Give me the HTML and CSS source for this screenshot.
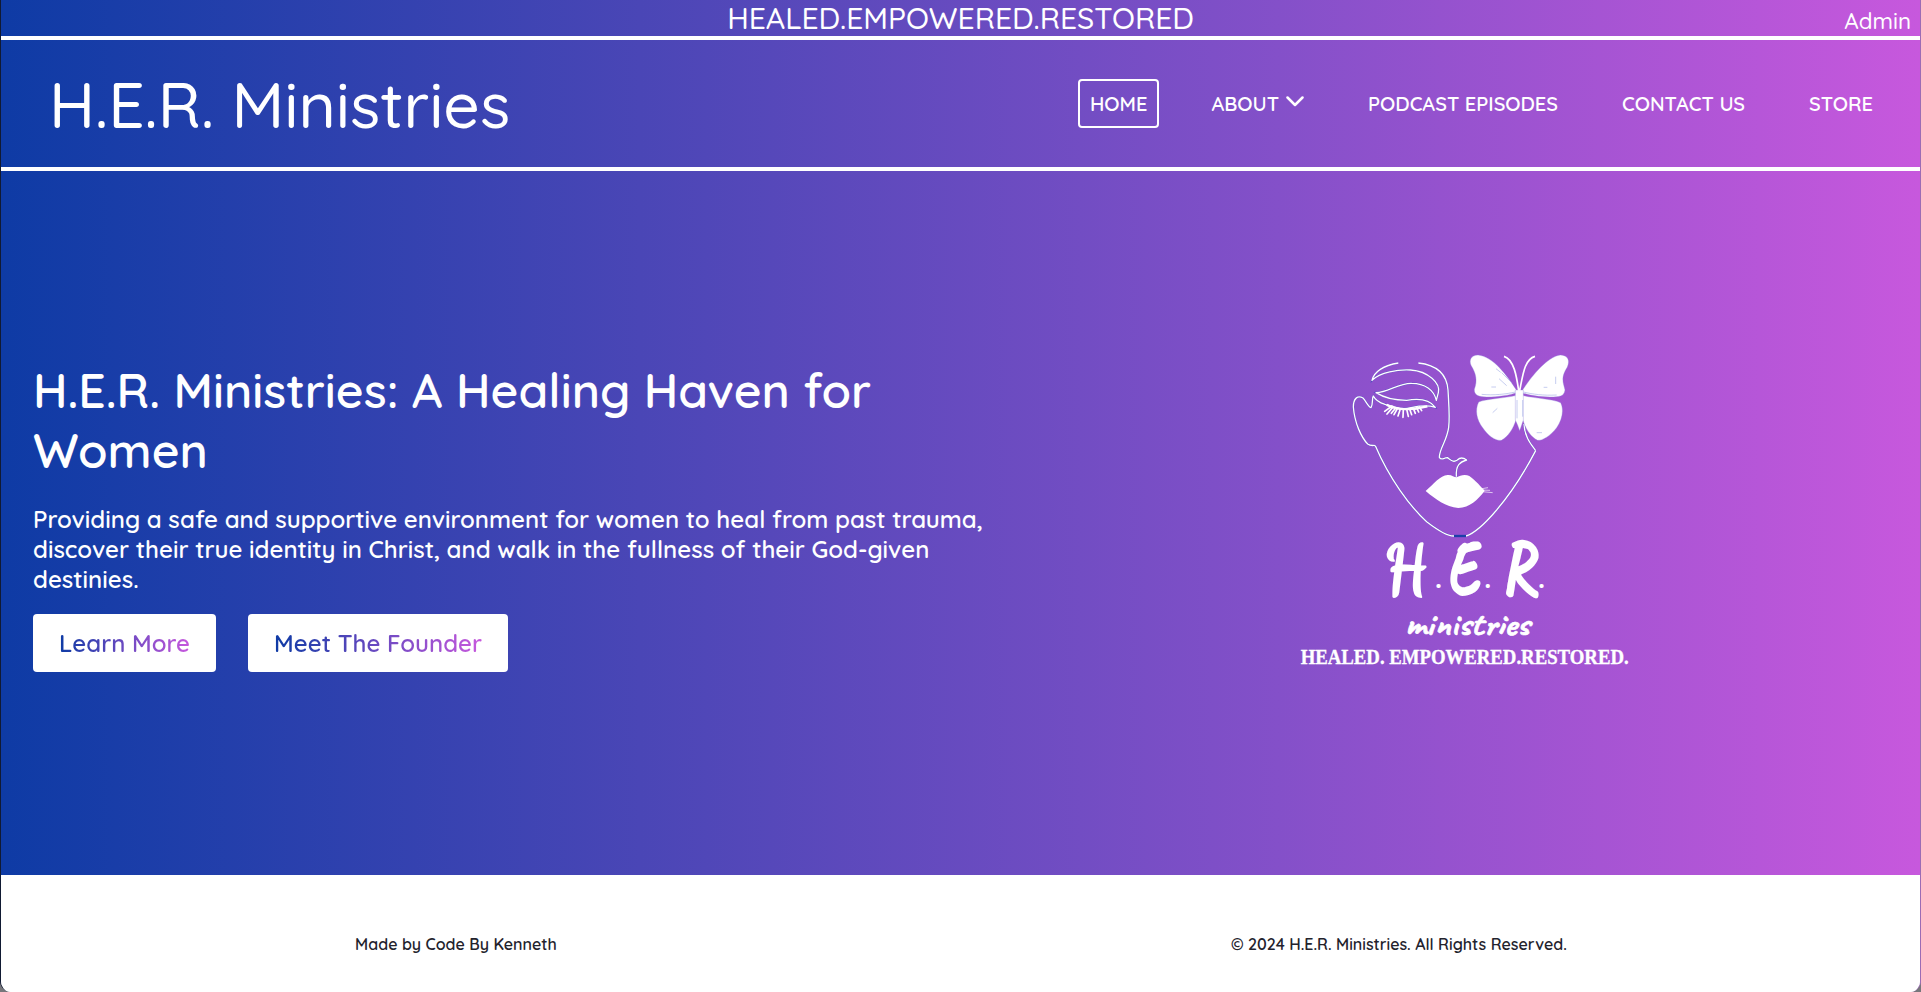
FILE: index.html
```html
<!DOCTYPE html>
<html lang="en">
<head>
<meta charset="utf-8">
<title>H.E.R. Ministries</title>
<link rel="stylesheet" href="styles.css">
</head>
<body>
<div class="page">
  <div class="topbar">
    <span class="tagline">HEALED.EMPOWERED.RESTORED</span>
    <a class="admin">Admin</a>
  </div>
  <header class="header">
    <a class="brand">H.E.R. Ministries</a>
    <nav class="nav">
      <a class="nav-link active">HOME</a>
      <a class="nav-link">ABOUT
        <svg class="chevron" viewBox="0 0 18 11"><path d="M1.500 1.500 9 9 16.500 1.500"/></svg></a>
      <a class="nav-link">PODCAST EPISODES</a>
      <a class="nav-link">CONTACT US</a>
      <a class="nav-link">STORE</a>
    </nav>
  </header>
  <main class="hero">
    <section class="intro">
      <h1>H.E.R. Ministries: A Healing Haven for Women</h1>
      <p>Providing a safe and supportive environment for women to heal from past trauma, discover their true identity in Christ, and walk in the fullness of their God-given destinies.</p>
      <div class="actions">
        <a class="button"><span>Learn More</span></a>
        <a class="button"><span>Meet The Founder</span></a>
      </div>
    </section>
    <svg class="logo" viewBox="0 0 1050 1020" role="img" aria-label="H.E.R. Ministries logo">
      <!-- face -->
      <g class="halo" transform="translate(120 0)"><use href="#face"/></g>
      <g class="lines" transform="translate(120 0)">
        <g id="face">
          <path d="M205 69C160 76 132 96 126 121C150 96 205 88 242 90C295 94 332 130 325 158L319 181C312 150 285 130 245 130C205 129 175 157 138 158C160 172 190 181 230 181C270 174 300 180 316 202C275 190 250 204 222 206C195 206 175 195 165 193C148 188 135 178 130 168C125 175 130 192 123 203C117 204 107 182 99 174C83 165 70 175 70 201C74 250 94 292 113 312C122 319 130 315 136 317"/>
          <path d="M136 317C178 415 240 500 290 545C320 568 350 589 372 588M408 588C450 575 540 480 617 332"/>
          <path d="M265 69C310 74 350 95 354 150C356 190 360 230 356 262C350 305 328 325 328 352C335 363 340 353 352 353C363 360 370 369 382 360C392 350 402 354 410 360C390 366 377 375 379 410"/>
          <path d="M582 252C583 290 604 314 617 332"/>
        </g>
        <path class="chin" d="M372 588H408"/>
        <path class="lash" d="M186 198 164 214M190 200 171 222M197 204 184 220M203 204 192 224M211 207 204 228M220 207 219 232M230 207 235 229M239 207 245 224M250 205 256 220M260 203 266 216M268 201 275 212"/>
        <path class="lid" d="M170 194C200 212 250 210 292 199"/>
        <path class="solid" d="M287 453C311 432 330 407 353 405C365 404 372 412 380 412C390 405 407 402 418 408C440 424 452 440 464 452C443 480 419 502 385 504C346 500 318 479 287 453Z"/>
        <path class="whisker" d="M456 446 474 443M457 455 488 458M452 450 480 451"/>
      </g>
      <!-- butterfly -->
      <g class="butterfly" transform="translate(120 0)">
        <path d="M560 151C530 105 490 50 444 45C422 46 417 61 423 76C438 100 443 122 433 148C432 165 445 171 470 171C505 171 540 165 560 158Z"/>
        <path d="M576 153C600 115 650 50 691 45C715 46 720 62 712 81C690 115 701 130 705 150C702 170 688 171 660 171C625 171 595 165 576 158Z"/>
        <path d="M560 166C525 175 470 176 446 186C434 210 440 240 458 263C475 288 496 303 514 301C535 290 550 265 558 240Z"/>
        <path d="M576 166C610 175 665 176 692 188C703 210 696 240 680 263C660 289 637 302 623 301C600 290 585 262 578 238Z"/>
        <path d="M556 150H580V240L574 258 569 272 563 256 556 240Z"/>
        <path class="antenna" d="M566 152C560 110 552 58 522 49M569 152C578 110 582 58 615 49"/>
        <path class="vein" d="M455 163C490 167 530 162 556 156M680 165C640 167 610 163 580 156M498 86 512 97M507 116 530 137M515 98 545 128M488 218 502 205M484 141H498M641 142H652M677 110V132M620 278H636M561 180V235M578 180V230"/>
      </g>
      <!-- wordmark -->
      <g class="script">
        <text transform="translate(294 752) skewX(10)" textLength="126" lengthAdjust="spacingAndGlyphs">H</text>
        <text class="dot" x="434" y="745">.</text>
        <text class="hand" transform="translate(474 756) skewX(6)" textLength="92" lengthAdjust="spacingAndGlyphs">E</text>
        <text class="dot" x="582" y="745">.</text>
        <text class="hand" transform="translate(636 754) skewX(8)" textLength="100" lengthAdjust="spacingAndGlyphs">R</text>
        <text class="dot" x="743" y="745">.</text>
      </g>
      <text class="ministries" x="344" y="884" textLength="374" lengthAdjust="spacingAndGlyphs">ministries</text>
      <text class="motto" x="32" y="972" textLength="984" lengthAdjust="spacingAndGlyphs">HEALED. EMPOWERED.RESTORED.</text>
    </svg>
  </main>
  <footer class="footer">
    <span>Made by Code By Kenneth</span>
    <span>© 2024 H.E.R. Ministries. All Rights Reserved.</span>
  </footer>
</div>
</body>
</html>
```
FILE: styles.css
```css
* { box-sizing: border-box; }

html { background: #77777b; }

body {
  margin: 0;
  font-family: Quicksand, Lato, sans-serif;
  font-weight: 500;
  color: #fff;
}

.page {
  height: 992px;
  display: flex;
  flex-direction: column;
  overflow: hidden;
  border-left: 1px solid #111a33;
  border-right: 1px solid #9b6cb5;
  border-radius: 0 0 11px 11px;
  background: #fff;
}

.topbar, .header, .hero {
  background: linear-gradient(to right, #0e3ba5, #4a46b6 33.3%, #8450c9 66.6%, #c758dd);
}

.topbar {
  height: 40px;
  display: grid;
  grid-template-columns: 1fr auto 1fr;
  border-bottom: 4px solid #fff;
}

.tagline {
  grid-column: 2;
  font-size: 30px;
  line-height: 37px;
}

.admin {
  justify-self: end;
  padding-right: 9px;
  font-size: 22.400px;
  line-height: 43px;
}

.header {
  height: 131px;
  display: flex;
  align-items: center;
  justify-content: space-between;
  padding: 0 35px 0 48px;
  border-bottom: 4px solid #fff;
}

.brand {
  font-size: 64px;
  line-height: 80px;
  padding-top: 1px;
}

.nav {
  display: flex;
  gap: 40px;
  font-size: 20px;
  font-weight: 600;
}

.nav-link {
  height: 49px;
  display: flex;
  align-items: center;
  gap: 7px;
  padding: 0 10px;
  border: 2px solid transparent;
  border-radius: 4px;
  white-space: nowrap;
}

.active { border-color: #fff; }

.chevron {
  width: 18px;
  height: 11px;
  margin-top: -4px;
  fill: none;
  stroke: #fff;
  stroke-width: 2.500;
  stroke-linecap: round;
  stroke-linejoin: round;
}

.hero {
  height: 704px;
  display: grid;
  grid-template-columns: 1289px 350px;
  align-items: center;
  font-weight: 600;
}

.intro { padding: 0 0 15px 32px; }

h1 {
  width: 900px;
  margin: 0;
  font-size: 48px;
  font-weight: 600;
  line-height: 60px;
}

p {
  width: 960px;
  margin: 24px 0 20px;
  font-size: 24px;
  line-height: 30px;
}

.actions { display: flex; gap: 32px; }

.button {
  height: 58px;
  display: flex;
  align-items: center;
  padding: 0 26px;
  border-radius: 4px;
  background: #fff;
  font-size: 24px;
}

.button span {
  background: linear-gradient(to right, #0e3ba5, #c758dd);
  background-clip: text;
  -webkit-background-clip: text;
  color: transparent;
}

.logo {
  width: 350px;
  height: 340px;
  align-self: start;
  margin-top: 169px;
  overflow: visible;
}

.lines { fill: none; stroke: #fff; stroke-width: 4; stroke-linejoin: round; }
.halo { fill: none; stroke: #4c50bd; stroke-width: 5; }
.lines .chin { stroke: #1c3fa8; stroke-width: 7; }
.lines .lash { stroke-width: 5; stroke-linecap: round; }
.lines .lid { stroke-width: 7; }
.lines .solid { fill: #fff; stroke: none; }
.lines .whisker { stroke-width: 2; }

.butterfly { fill: #fff; stroke: #8c80da; stroke-width: 1; }
.butterfly .antenna { fill: none; stroke: #fff; stroke-width: 5; }
.butterfly .vein { fill: none; stroke: #a9b4e8; stroke-width: 2; }

.script {
  fill: #fff;
  stroke: #fff;
  stroke-width: 7;
  stroke-linejoin: round;
  font: 700 198px "Dancing Script", cursive;
}

.script .hand { font: 700 222px Caveat, cursive; }
.script .dot { font: 700 90px Quicksand, sans-serif; stroke: none; }

.ministries {
  fill: #fff;
  stroke: #fff;
  stroke-width: 2;
  font: 700 104px Caveat, cursive;
}

.motto {
  fill: #fff;
  stroke: #fff;
  stroke-width: 1;
  font: 700 60px "Liberation Serif", serif;
}

.footer {
  flex: 1;
  display: flex;
  align-items: center;
  justify-content: space-around;
  padding: 20px 16px 0 17px;
  background: #fff;
  color: #23232d;
  font-size: 16px;
  font-weight: 600;
}
```
